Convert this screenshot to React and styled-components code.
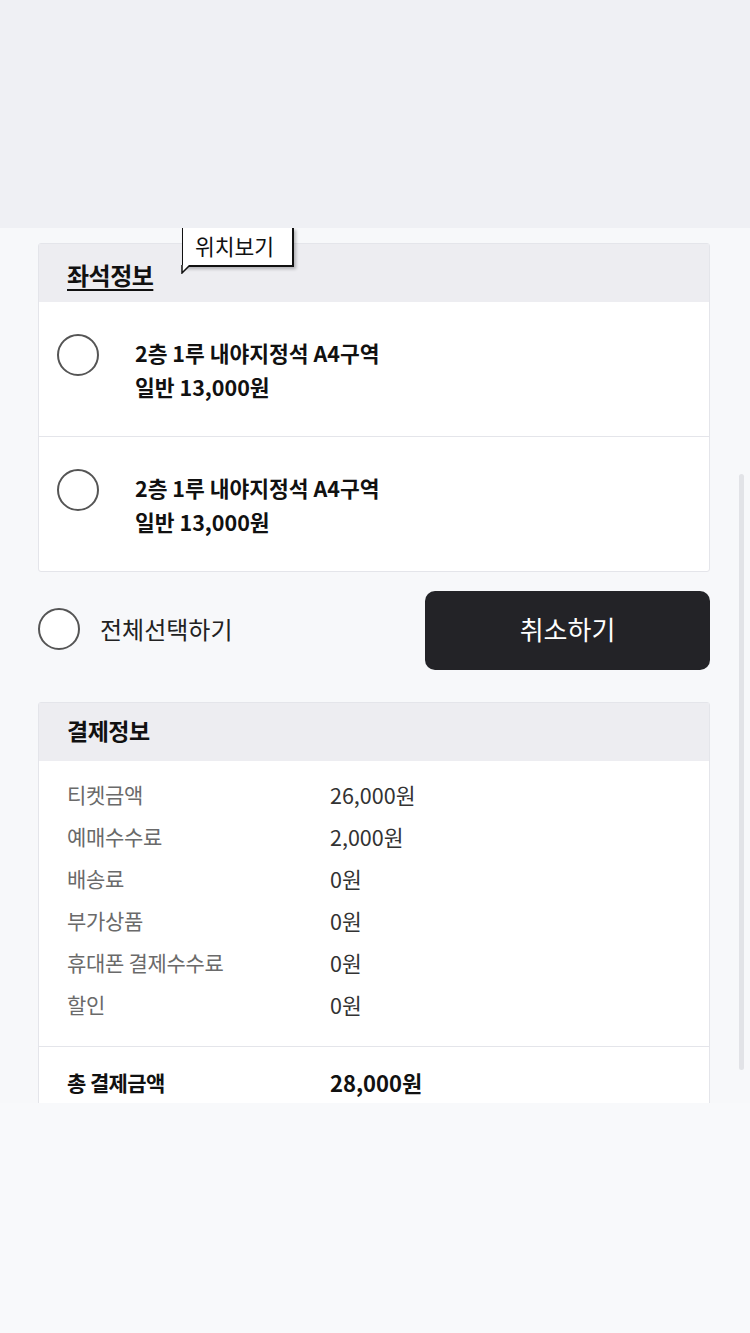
import React from "react";
import styled, { createGlobalStyle } from "styled-components";

const GlobalStyle = createGlobalStyle`
  html, body {
    margin: 0;
    padding: 0;
    background: #f8f9fb;
  }
  body {
    font-family: "Noto Sans CJK KR", "Noto Sans", sans-serif;
    color: #111;
  }
`;

const seats = [
  { id: 1, name: "2층 1루 내야지정석 A4구역", price: "일반 13,000원" },
  { id: 2, name: "2층 1루 내야지정석 A4구역", price: "일반 13,000원" },
];

const payments = [
  { label: "티켓금액", value: "26,000원" },
  { label: "예매수수료", value: "2,000원" },
  { label: "배송료", value: "0원" },
  { label: "부가상품", value: "0원" },
  { label: "휴대폰 결제수수료", value: "0원" },
  { label: "할인", value: "0원" },
];

function App() {
  return (
    <>
      <GlobalStyle />
      <Page>
        <TopArea />
        <Scroller>
          <Content>
            <Card>
              <CardHeader>
                <Title underline>좌석정보</Title>
                <Tooltip>
                  위치보기
                  <Tail viewBox="0 0 10 9" width="10" height="9">
                    <path d="M1 0 L1 8 L9 0" fill="#fff" stroke="#111" strokeWidth="1.5" />
                  </Tail>
                </Tooltip>
              </CardHeader>
              {seats.map((seat) => (
                <SeatRow key={seat.id}>
                  <Radio />
                  <SeatText>
                    <div>{seat.name}</div>
                    <div>{seat.price}</div>
                  </SeatText>
                </SeatRow>
              ))}
            </Card>

            <ActionRow>
              <SelectAll>
                <Radio />
                <span>전체선택하기</span>
              </SelectAll>
              <CancelButton>취소하기</CancelButton>
            </ActionRow>

            <Card>
              <CardHeader>
                <Title>결제정보</Title>
              </CardHeader>
              <PayList>
                {payments.map((p) => (
                  <PayRow key={p.label}>
                    <PayLabel>{p.label}</PayLabel>
                    <PayValue>{p.value}</PayValue>
                  </PayRow>
                ))}
              </PayList>
              <TotalRow>
                <PayLabel bold>총 결제금액</PayLabel>
                <PayValue bold>28,000원</PayValue>
              </TotalRow>
            </Card>
          </Content>
          <ScrollThumb />
        </Scroller>
      </Page>
    </>
  );
}

const Page = styled.div`
  width: 750px;
  height: 1333px;
  display: flex;
  flex-direction: column;
  background: #f8f9fb;
  overflow: hidden;
`;

const TopArea = styled.div`
  height: 228px;
  flex-shrink: 0;
  background: #eff0f4;
`;

const Scroller = styled.div`
  position: relative;
  height: 875px;
  flex-shrink: 0;
  overflow: hidden;
  background: #f7f8fa;
`;

const Content = styled.div`
  padding: 15px 40px 0 38px;
  display: flex;
  flex-direction: column;
`;

const Card = styled.div`
  border: 1px solid #e4e5ea;
  border-radius: 3px;
  background: #fff;
`;

const CardHeader = styled.div`
  position: relative;
  height: 58px;
  display: flex;
  align-items: center;
  padding: 0 28px;
  background: #ededf1;
`;

const Title = styled.h2`
  margin: 0;
  font-size: ${(p) => (p.underline ? "24px" : "23px")};
  font-weight: 700;
  letter-spacing: -0.5px;
  color: #111;
  text-decoration: ${(p) => (p.underline ? "underline" : "none")};
  text-underline-offset: 4px;
  text-decoration-thickness: 2px;
  padding-top: ${(p) => (p.underline ? "2px" : "0")};
  margin-top: ${(p) => (p.underline ? "0" : "-4px")};
`;

const Tooltip = styled.div`
  position: absolute;
  left: 143px;
  top: -16px;
  width: 112px;
  height: 39px;
  box-sizing: border-box;
  background: #fff;
  border-left: 1.5px solid #111;
  border-right: 2px solid #111;
  border-bottom: 2px solid #111;
  box-shadow: 2px 2px 3px rgba(0, 0, 0, 0.25);
  font-size: 21.5px;
  line-height: 36px;
  padding-left: 12px;
  color: #111;
`;

const Tail = styled.svg`
  position: absolute;
  left: -2px;
  bottom: -9px;
`;

const SeatRow = styled.div`
  height: 134px;
  box-sizing: border-box;
  display: flex;
  align-items: flex-start;
  gap: 36px;
  padding: 32px 18px 0;
  & + & {
    border-top: 1px solid #e4e5ea;
    height: 135px;
  }
`;

const Radio = styled.span`
  width: 42px;
  height: 42px;
  box-sizing: border-box;
  border: 2px solid #555;
  border-radius: 50%;
  background: #fff;
  flex-shrink: 0;
`;

const SeatText = styled.div`
  display: flex;
  flex-direction: column;
  font-size: 21.5px;
  font-weight: 700;
  line-height: 34px;
  color: #111;
  padding-top: 2px;
`;

const ActionRow = styled.div`
  display: flex;
  align-items: center;
  justify-content: space-between;
  margin: 19px 0 32px;
`;

const SelectAll = styled.label`
  display: flex;
  align-items: center;
  gap: 20px;
  font-size: 24px;
  color: #222;
  margin-bottom: 4px;
`;

const CancelButton = styled.button`
  width: 285px;
  height: 79px;
  border: none;
  border-radius: 10px;
  background: #232327;
  color: #fff;
  font-family: inherit;
  font-size: 26px;
  padding-bottom: 6px;
  cursor: pointer;
`;

const PayList = styled.div`
  padding: 12px 28px 21px;
  display: flex;
  flex-direction: column;
`;

const PayRow = styled.div`
  height: 42px;
  display: grid;
  grid-template-columns: 263px 1fr;
  grid-auto-rows: 42px;
  align-items: center;
`;

const TotalRow = styled(PayRow)`
  height: 90px;
  align-content: start;
  border-top: 1px solid #e4e5ea;
  padding: 14px 28px 0;
`;

const PayLabel = styled.span`
  font-size: 21px;
  font-weight: ${(p) => (p.bold ? 700 : 400)};
  color: ${(p) => (p.bold ? "#111" : "#6a6a6a")};
  letter-spacing: ${(p) => (p.bold ? "-0.6px" : "-0.3px")};
`;

const PayValue = styled.span`
  font-size: ${(p) => (p.bold ? "22px" : "21.5px")};
  font-weight: ${(p) => (p.bold ? 700 : 400)};
  color: ${(p) => (p.bold ? "#111" : "#333")};
`;

const ScrollThumb = styled.div`
  position: absolute;
  right: 6px;
  top: 246px;
  width: 5px;
  height: 596px;
  border-radius: 3px;
  background: #e2e3e7;
`;

export default App;
